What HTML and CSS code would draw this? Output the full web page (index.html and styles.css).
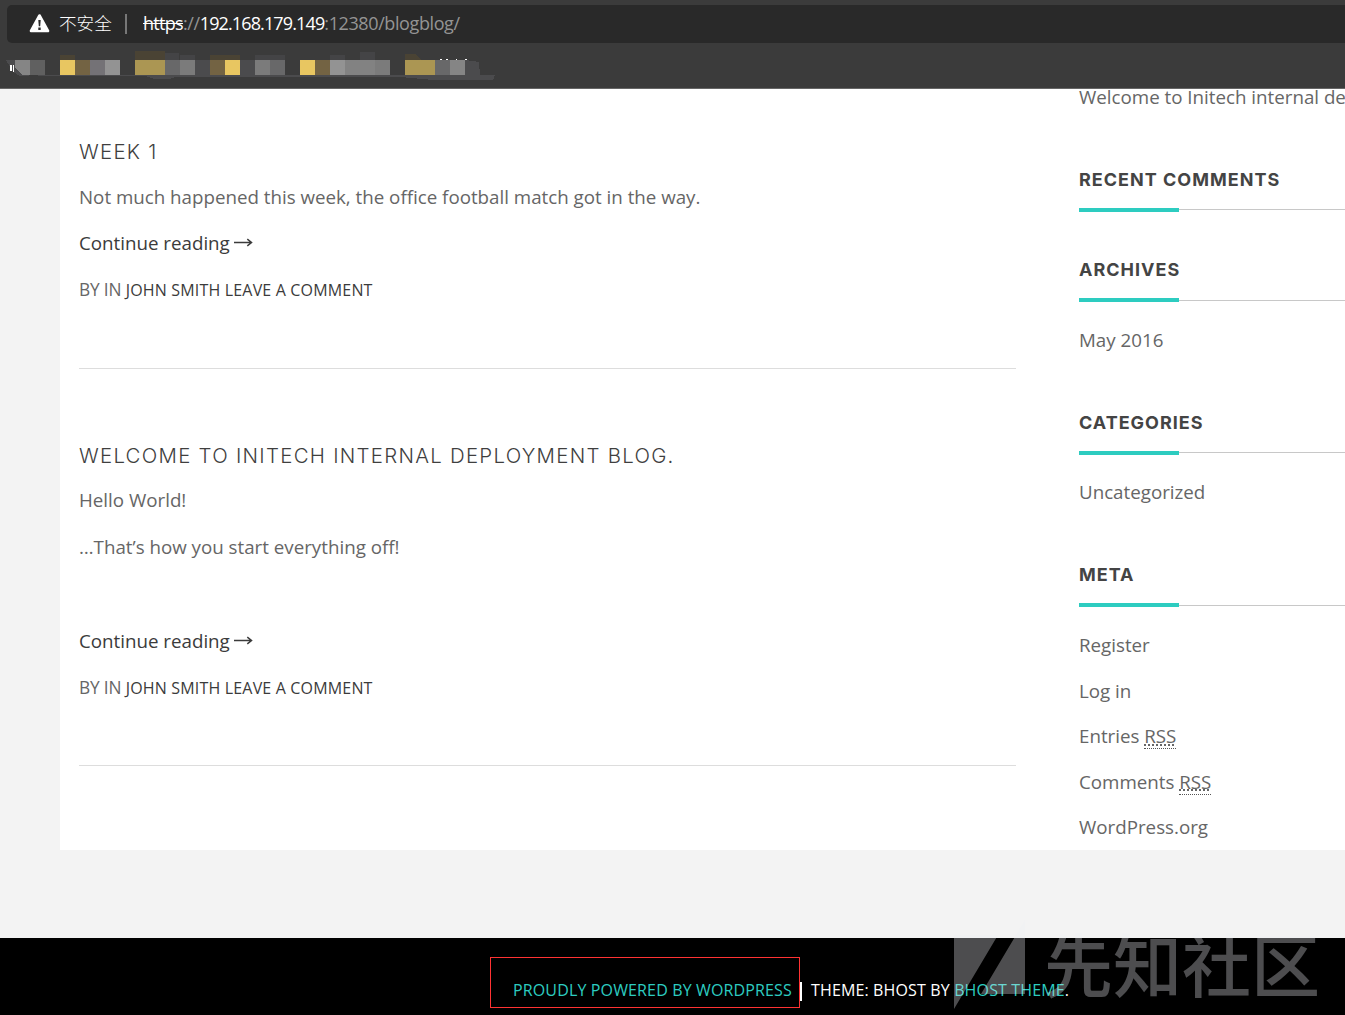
FILE: index.html
```
<!DOCTYPE html>
<html lang="en">
<head>
<meta charset="utf-8">
<title>Initech blog</title>
<link rel="stylesheet" href="styles.css">
</head>
<body>
<header class="browser">
  <div class="address">
    <svg class="warning" width="21" height="19" viewBox="0 0 21 19"><path d="M10.5 1.5 19 17H2z" fill="#fff" stroke="#fff" stroke-width="2.6" stroke-linejoin="round"/><path d="M9.3 6h2.4l-.5 6.2H9.8zM9.3 13.6h2.4V16H9.3z" fill="#292929"/></svg>
    <span class="insecure">不安全</span>
    <span class="divider"></span>
    <span class="url"><s>https</s>://<b>192.168.179.149</b>:12380/blogblog/</span>
  </div>
  <svg class="bookmarks" width="500" height="36" viewBox="0 48 500 36" shape-rendering="crispEdges">
    <path fill="#4b4b4d" d="M6 60h39v15h-7l-18 1-7-4zM45 75h440l10 0-2 5h-60l-32-3H175l-5 2h-15l-10-3H30zM195 60h15v15h-15zM240 60h15v15h-15zM465 60l14 2 1 13h-15z"/>
    <path fill="#4a4334" d="M60 55h15v5H60zM135 51h30v9h-30zM210 55h30v5h-30zM405 54h10l6 5v1h-16z"/>
    <path fill="#444446" d="M165 53h14v7h-14zM180 55h15v5h-15zM255 55h30v5h-30zM330 55h15v5h-15zM360 52h15v8h-15z"/>
    <path fill="#858585" d="M15 60h15v15h-8l-7-7zM450 60h15v15h-15z"/>
    <path fill="#606060" d="M30 60h15v15H30z"/>
    <path fill="#e8c661" d="M60 60h15v15H60zM225 60h15v15h-15zM300 60h15v15h-15z"/>
    <path fill="#736343" d="M75 60h15v15H75zM210 60h15v15h-15zM315 60h15v15h-15z"/>
    <path fill="#ab9653" d="M135 60h30v15h-30zM405 60h30v15h-30z"/>
    <path fill="#747276" d="M90 60h15v15H90z"/>
    <path fill="#939393" d="M105 60h15v15h-15zM330 60h15v15h-15z"/>
    <path fill="#686869" d="M165 60h15v15h-15zM270 60h15v15h-15zM435 60h15v15h-15z"/>
    <path fill="#7b7b7b" d="M180 60h15v15h-15zM255 60h15v15h-15zM375 60h15v15h-15z"/>
    <path fill="#828282" d="M345 60h30v15h-30z"/>
    <path fill="#fff" d="M10 65h2v6h-2zM13 65h1v7h-1zM440 59h2v1h-2zM446 59h2v1h-2zM456 59h1v1h-1zM465 59h2v1h-2z"/>
  </svg>
</header>
<div class="page">
  <main class="posts">
    <article class="post">
      <h2>Week 1</h2>
      <p>Not much happened this week, the office football match got in the way.</p>
      <p class="more">Continue reading <svg class="arrow" width="19" height="11" viewBox="0 0 19 11"><path d="M0 5.5h17M13.3 2.2 17.5 5.5 13.3 8.8" fill="none" stroke="#3b3b3b" stroke-width="1.5"/></svg></p>
      <p class="meta">By in <a>John Smith</a> <a>Leave a comment</a></p>
    </article>
    <article class="post">
      <h2>Welcome to Initech internal deployment blog.</h2>
      <p class="first">Hello World!</p>
      <p class="last">…That’s how you start everything off!</p>
      <p class="more">Continue reading <svg class="arrow" width="19" height="11" viewBox="0 0 19 11"><path d="M0 5.5h17M13.3 2.2 17.5 5.5 13.3 8.8" fill="none" stroke="#3b3b3b" stroke-width="1.5"/></svg></p>
      <p class="meta">By in <a>John Smith</a> <a>Leave a comment</a></p>
    </article>
  </main>
  <aside class="sidebar">
    <div class="recent">Welcome to Initech internal deployment blog.</div>
    <section><h3 class="comments">Recent Comments</h3></section>
    <section class="archives"><h3>Archives</h3><ul><li>May 2016</li></ul></section>
    <section><h3 class="categories">Categories</h3><ul><li>Uncategorized</li></ul></section>
    <section><h3>Meta</h3><ul><li>Register</li><li>Log in</li><li>Entries <abbr>RSS</abbr></li><li>Comments <abbr>RSS</abbr></li><li>WordPress.org</li></ul></section>
  </aside>
</div>
<footer class="footer">
  <div class="credit"><a>Proudly powered by WordPress</a></div>
  <span class="bar"></span>
  <div class="theme">Theme: BHost by <a>BHost Theme</a>.</div>
</footer>
<div class="watermark">
  <svg width="72" height="90" viewBox="0 0 72 90"><path d="M0 15h44L0 89zM71 0v74H27z" fill="#eff0f5"/></svg>
  <span>先知社区</span>
</div>
</body>
</html>
```
FILE: styles.css
```
* { box-sizing: border-box; }
body { margin: 0; width: 1345px; height: 1015px; overflow: hidden; position: relative; background: #f3f3f3; color: #666; font: 18.74px/28px "Open Sans", sans-serif; }
h2, h3, p, ul { margin: 0; padding: 0; }
ul { list-style: none; }

.browser { height: 89px; padding: 5px 0 0 7px; background: #3b3b3b; border-bottom: 1px solid #666; }
.address { display: flex; align-items: center; height: 38px; padding-left: 22px; border-radius: 5px 0 0 5px; background: #292929; color: #fff; font-family: "Open Sans", "Noto Sans CJK SC", sans-serif; font-size: 18px; }
.warning { margin-bottom: 2px; }
.insecure { margin: 0 0 2px 9px; width: 54px; font-family: "Noto Sans CJK SC", sans-serif; font-size: 17.6px; font-weight: 300; white-space: nowrap; }
.divider { width: 2px; height: 20px; margin: 0 16px 0 12px; background: #777; }
.url { margin-bottom: 2px; color: #949494; letter-spacing: -.4px; }
.url s { color: #fff; letter-spacing: -.7px; }
.url b { color: #fff; font-weight: 400; letter-spacing: -.87px; }
.bookmarks { display: block; margin: 5px 0 0 -7px; }

.page { display: flex; width: 1285px; height: 761px; margin-left: 60px; padding-left: 19px; background: #fff; overflow: hidden; }
.posts { width: 937px; padding-top: 47px; flex: none; }
.post { height: 233px; border-bottom: 1px solid #ddd; }
.post + .post { height: 326px; margin-top: 71px; }
h2 { height: 47px; padding-top: 1px; color: #3f3f3f; font: 300 20.4px/30px Inter, sans-serif; letter-spacing: 1.28px; text-transform: uppercase; white-space: nowrap; }
.post + .post h2 { height: 46px; }
.post p { margin-bottom: 18px; white-space: nowrap; }
.post .first { margin-bottom: 19px; }
.post .last { margin-bottom: 66px; }
.post .more { margin-bottom: 19px; color: #3b3b3b; }
.arrow { margin-left: -1px; vertical-align: 2px; }
.post .meta { font-size: 17.3px; text-transform: uppercase; letter-spacing: -.15px; }
.meta a { color: #3b3b3b; font-size: 16px; letter-spacing: .17px; }

.sidebar { width: 266px; margin-left: 63px; flex: none; white-space: nowrap; }
.recent { margin-top: -6px; height: 82px; }
h3 { --rule: 45px; height: 47px; color: #444; font: 700 18px/30px Inter, sans-serif; letter-spacing: 1px; text-transform: uppercase; background: linear-gradient(#2dccc0, #2dccc0) 0 43px / 100px 4px no-repeat, linear-gradient(#c8c8c8, #c8c8c8) 0 var(--rule) / 100% 1px no-repeat; }
.comments, .categories { --rule: 44px; }
section { padding-bottom: 43px; }
.archives, .archives ~ section { padding-bottom: 60px; }
section ul { padding-top: 24px; height: 46px; }
.categories + ul { padding-top: 23px; height: 45px; }
li { height: 45.6px; line-height: 28px; }
abbr { text-decoration: underline dotted 2px; border-bottom: 1px dotted #555; }

.footer { display: flex; height: 77px; margin-top: 88px; padding: 19px 0 0 490px; background: #000; color: #fff; font-size: 16px; letter-spacing: .14px; text-transform: uppercase; white-space: nowrap; }
.footer a { color: #2dccc0; }
.credit { width: 310px; height: 51px; padding: 18px 0 0 22px; border: 1px solid #f33; }
.bar { width: 2px; height: 19px; margin: 25px 9px 0 0; background: #fff; }
.theme { padding-top: 19px; }
.watermark { position: absolute; left: 954px; top: 920px; display: flex; opacity: .32; color: #eff0f5; font: 500 69px/84px "Noto Sans CJK SC", sans-serif; white-space: nowrap; }
.watermark span { margin-left: 18px; }
```
